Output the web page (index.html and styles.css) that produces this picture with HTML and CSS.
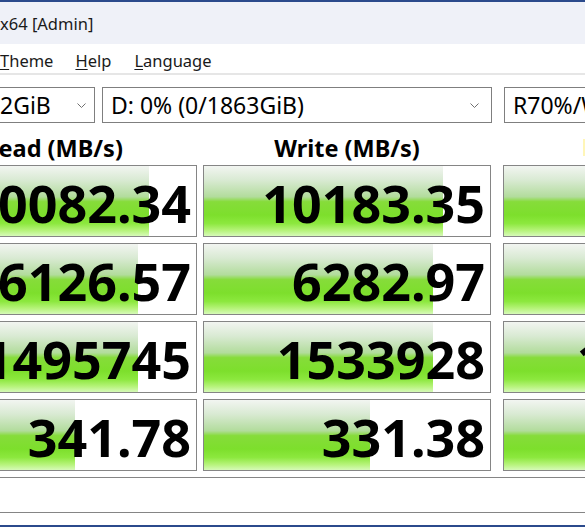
FILE: index.html
```html
<!DOCTYPE html>
<html>
<head>
<meta charset="utf-8">
<link rel="stylesheet" href="styles.css">
</head>
<body>
<div class="desk"></div>
<div class="titlebar"><span class="title">x64 [Admin]</span></div>
<div class="menubar">
  <span class="menu m-theme"><u>T</u>heme</span>
  <span class="menu m-help"><u>H</u>elp</span>
  <span class="menu m-lang"><u>L</u>anguage</span>
</div>
<div class="sep"></div>
<div class="main">
  <div class="controls">
    <div class="select s-size"><span class="val">2GiB</span><svg class="chev" width="9" height="5" viewBox="0 0 9 5"><polyline points="0.5,0.5 4.5,4.5 8.5,0.5" fill="none" stroke="#707070" stroke-width="1"/></svg></div>
    <div class="select s-drive"><span class="val">D: 0% (0/1863GiB)</span><svg class="chev" width="9" height="5" viewBox="0 0 9 5"><polyline points="0.5,0.5 4.5,4.5 8.5,0.5" fill="none" stroke="#707070" stroke-width="1"/></svg></div>
    <div class="select s-mix"><span class="val">R70%/W30%</span></div>
  </div>
  <div class="board">
    <div class="heads">
      <div class="head">Read (MB/s)</div>
      <div class="head">Write (MB/s)</div>
      <div class="head head-mix"><span class="mixmark"></span></div>
    </div>
    <div class="grid">
      <div class="cell"><div class="bar" style="width:239px"></div><div class="num">10082.34</div></div>
      <div class="cell"><div class="bar" style="width:239px"></div><div class="num">10183.35</div></div>
      <div class="cell c3"><div class="bar" style="width:100%"></div><div class="num">8456.21</div></div>

      <div class="cell"><div class="bar" style="width:228px"></div><div class="num">6126.57</div></div>
      <div class="cell"><div class="bar" style="width:229px"></div><div class="num">6282.97</div></div>
      <div class="cell c3"><div class="bar" style="width:100%"></div><div class="num">5893.10</div></div>

      <div class="cell"><div class="bar" style="width:228px"></div><div class="num">1495745</div></div>
      <div class="cell"><div class="bar" style="width:229px"></div><div class="num">1533928</div></div>
      <div class="cell c3"><div class="bar" style="width:100%"></div><div class="num">1438722</div></div>

      <div class="cell"><div class="bar" style="width:165px"></div><div class="num">341.78</div></div>
      <div class="cell"><div class="bar" style="width:166px"></div><div class="num">331.38</div></div>
      <div class="cell c3"><div class="bar" style="width:100%"></div><div class="num">312.64</div></div>
    </div>
  </div>
  <div class="comment"></div>
</div>
<div class="spacer"></div>
<div class="desk"></div>
</body>
</html>
```
FILE: styles.css
```css
html, body {
  margin: 0;
  padding: 0;
}
body {
  width: 585px;
  height: 527px;
  overflow: hidden;
  background: #ffffff;
  font-family: "Noto Sans", "Open Sans", sans-serif;
  color: #000;
}
.desk {
  height: 2px;
  background: #2b4a8c;
}
.titlebar {
  height: 42px;
  background: #eff1f8;
  display: flex;
  align-items: center;
}
.title {
  font-size: 16.5px;
  line-height: 20px;
  color: #1a1a1a;
  margin-top: 1px;
}
.menubar {
  height: 29px;
  display: flex;
  align-items: center;
  background: #fff;
}
.menu {
  font-size: 16.5px;
  line-height: 20px;
  color: #1a1a1a;
  margin-top: 4px;
}
.m-theme { margin-right: 22px; }
.m-help { margin-right: 23px; }
.menu u {
  text-decoration-thickness: 1px;
  text-underline-offset: 2px;
}
.sep {
  height: 2px;
  background: #e6e6e6;
}
.main {
  padding-top: 12px;
}
.controls {
  display: flex;
  gap: 6px;
  margin-left: -8px;
  height: 36px;
}
.select {
  box-sizing: border-box;
  height: 36px;
  border: 1px solid #7f7f7f;
  display: flex;
  align-items: center;
  justify-content: space-between;
  padding: 0 8px 0 7px;
  font-size: 23px;
  flex: none;
  overflow: hidden;
  white-space: nowrap;
}
.s-size { width: 103px; }
.s-drive { width: 390px; padding-left: 8px; padding-right: 12px; margin-left: 1px; }
.s-mix { width: 200px; margin-left: 6px; padding-left: 8px; justify-content: flex-start; }
.chev { flex: none; }
.board {
  margin-left: -91px;
}
.heads {
  display: grid;
  grid-template-columns: 288px 288px 288px;
  column-gap: 6px;
  height: 42px;
  align-items: center;
}
.head {
  text-align: center;
  font-weight: 700;
  font-size: 23.5px;
  line-height: 26px;
  margin-top: 8px;
  white-space: nowrap;
}
.head-mix {
  margin-left: 6px;
  text-align: left;
  height: 18px;
}
.mixmark {
  display: block;
  width: 2px;
  height: 17px;
  margin-left: 80px;
  background: #fff6b8;
}
.grid {
  display: grid;
  grid-template-columns: 288px 288px 294px;
  grid-auto-rows: 72px;
  column-gap: 6px;
  row-gap: 6px;
}
.cell {
  box-sizing: border-box;
  border: 1px solid #858585;
  background: #fff;
  display: grid;
  overflow: hidden;
}
.cell.c3 {
  margin-left: 6px;
}
.bar {
  grid-area: 1 / 1;
  justify-self: start;
  height: 100%;
  background: linear-gradient(to bottom,
    #f2f5f1 0%,
    #d9ead3 20%,
    #b2dc9c 44%,
    #86dc3a 51%,
    #7ddf2c 70%,
    #8ce83e 82%,
    #b6f37a 92%,
    #d6fab8 100%);
}
.num {
  grid-area: 1 / 1;
  justify-self: end;
  align-self: center;
  font-weight: 700;
  font-size: 52px;
  line-height: 60px;
  padding-right: 5px;
  margin-top: 3px;
  white-space: nowrap;
}
.comment {
  margin-top: 6px;
  height: 34px;
  border-top: 1px solid #858585;
  border-bottom: 1px solid #858585;
}
.spacer {
  height: 12px;
}
```
